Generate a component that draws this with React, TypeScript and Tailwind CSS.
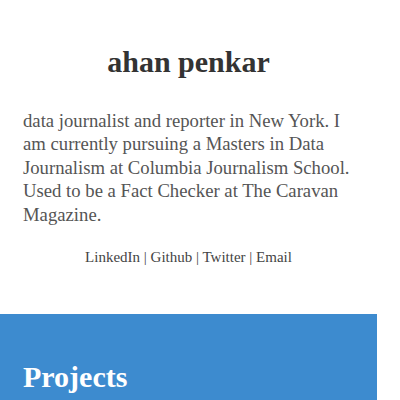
export default function App() {
  return (
    <div className="w-[377px] bg-white" style={{ fontFamily: '"Liberation Serif", serif' }}>
      <div className="px-[23px] pt-[44px] pb-[48px]">
        <h1 className="text-center text-[30px] leading-[36px] font-bold text-[#333333]">ahan penkar</h1>
        <p className="mt-[29px] text-[18.7px] leading-[23.4px] text-[#555555]">
          data journalist and reporter in New York. I am currently pursuing a Masters in Data Journalism at Columbia Journalism School. Used to be a Fact Checker at The Caravan Magazine.
        </p>
        <p className="mt-[22px] text-center text-[15px] leading-[18px] text-[#444444]">
          LinkedIn | Github | Twitter | Email
        </p>
      </div>
      <div className="bg-[#3d8bcf] px-[23px] pt-[45px] pb-[20px]">
        <h2 className="text-[30px] leading-[36px] font-bold text-white">Projects</h2>
      </div>
    </div>
  );
}
